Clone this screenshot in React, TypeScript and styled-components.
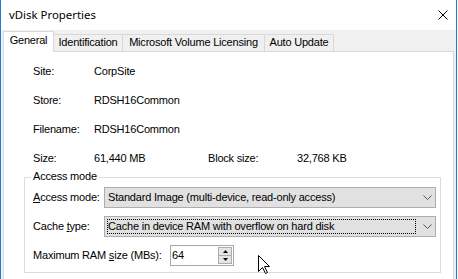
import React from 'react';
import styled, { createGlobalStyle } from 'styled-components';

const Global = createGlobalStyle`
  html, body { margin: 0; padding: 0; background: #ffffff; }
  body { width: 458px; height: 279px; overflow: hidden; }
`;

const Screen = styled.div`
  width: 458px;
  height: 279px;
  overflow: hidden;
  background: #ffffff;
`;

const Window = styled.div`
  position: relative;
  width: 457px;
  height: 292px;
  box-sizing: border-box;
  border-left: 1px solid #1a7fd6;
  border-right: 1px solid #1a7fd6;
  display: flex;
  flex-direction: column;
  font-family: "Liberation Sans", Arial, sans-serif;
  font-size: 11px;
  letter-spacing: -0.2px;
  color: #000000;
`;

const TitleBar = styled.div`
  height: 30px;
  flex: none;
  background: #ffffff;
  display: flex;
  align-items: center;
  justify-content: space-between;
  padding: 0 8px;
`;

const Title = styled.span`
  font-family: "Noto Sans", "Open Sans", sans-serif;
  font-size: 11.4px;
  letter-spacing: 0;
  line-height: 16px;
`;

const Body = styled.div`
  flex: 1;
  background: #f0f0f0;
  padding: 1px 2px 0;
  display: flex;
  flex-direction: column;
`;

const TabRow = styled.div`
  display: flex;
  align-items: flex-end;
  height: 20px;
  flex: none;
`;

const Tab = styled.div<{ $w: number; $active?: boolean }>`
  box-sizing: border-box;
  width: ${p => p.$w}px;
  height: ${p => (p.$active ? 21 : 17)}px;
  margin-bottom: ${p => (p.$active ? -1 : 0)}px;
  position: relative;
  z-index: ${p => (p.$active ? 1 : 0)};
  background: ${p => (p.$active ? '#ffffff' : '#f0f0f0')};
  border-top: 1px solid #d9d9d9;
  border-right: 1px solid #d9d9d9;
  border-left: ${p => (p.$active ? '1px solid #d9d9d9' : 'none')};
  padding-top: ${p => (p.$active ? 2 : 1)}px;
  text-align: center;
  line-height: 13px;
  white-space: nowrap;
`;

const Panel = styled.div`
  flex: 1;
  background: #ffffff;
  border: 1px solid #d9d9d9;
  padding: 13px 12px 0 20px;
`;

const InfoList = styled.div`
  display: flex;
  flex-direction: column;
  gap: 16px;
  margin-left: 9px;
`;

const InfoRow = styled.div`
  display: grid;
  grid-template-columns: 61px 114px 89px auto;
  line-height: 13px;
  white-space: nowrap;
`;

const GroupBox = styled.div`
  margin-top: 12px;
  border: 1px solid #dcdcdc;
  padding: 0 4px 6px 8px;
`;

const Legend = styled.div`
  width: fit-content;
  margin: -8px 0 0 -2px;
  padding: 0 2px;
  background: #ffffff;
  line-height: 13px;
`;

const Rows = styled.div`
  margin-top: 4px;
  display: flex;
  flex-direction: column;
  gap: 8px;
`;

const Row = styled.div`
  display: flex;
  align-items: center;
  height: 21px;
`;

const Label = styled.div<{ $w: number }>`
  width: ${p => p.$w}px;
  flex: none;
  line-height: 13px;
  white-space: nowrap;
`;

const Key = styled.span`
  text-decoration: underline;
  text-underline-offset: 1px;
`;

const Combo = styled.div`
  flex: 1;
  height: 21px;
  box-sizing: border-box;
  border: 1px solid #adadad;
  background: #e1e1e1;
  display: flex;
  align-items: stretch;
`;

const ComboValue = styled.div<{ $focused?: boolean }>`
  flex: 1;
  margin: 2px 0 2px 2px;
  border: 1px ${p => (p.$focused ? 'dotted #000000' : 'solid transparent')};
  display: flex;
  align-items: center;
  line-height: 13px;
  white-space: nowrap;
  overflow: hidden;
`;

const ComboArrow = styled.div`
  width: 19px;
  flex: none;
  display: flex;
  align-items: center;
  padding-left: 7px;
  box-sizing: border-box;
`;

const SpinBox = styled.div`
  width: 64px;
  height: 21px;
  box-sizing: border-box;
  border: 1px solid #a9a9a9;
  background: #ffffff;
  display: flex;
`;

const SpinText = styled.div`
  flex: 1;
  padding-left: 1px;
  display: flex;
  align-items: center;
  line-height: 13px;
`;

const SpinButtons = styled.div`
  width: 15px;
  box-sizing: border-box;
  padding: 1px 1px 1px 0;
  display: flex;
  flex-direction: column;
`;

const SpinButton = styled.div`
  flex: 1;
  box-sizing: border-box;
  border: 1px solid #adadad;
  background: #e5e5e5;
  display: flex;
  align-items: center;
  justify-content: center;
  & + & { margin-top: -1px; }
`;

const Cursor = styled.svg`
  position: absolute;
  left: 257px;
  top: 255px;
`;

const Chevron = () => (
  <svg width="9" height="5" viewBox="0 0 9 5">
    <polyline points="0.5,0.5 4.5,4.5 8.5,0.5" fill="none" stroke="#555555" strokeWidth="1" />
  </svg>
);

export default function App() {
  return (
    <Screen>
      <Global />
      <Window>
        <TitleBar>
          <Title>vDisk Properties</Title>
          <svg width="10" height="10" viewBox="0 0 10 10">
            <path d="M0.5 0.5 L9.5 9.5 M9.5 0.5 L0.5 9.5" stroke="#000000" strokeWidth="1" />
          </svg>
        </TitleBar>
        <Body>
          <TabRow>
            <Tab $w={51} $active>General</Tab>
            <Tab $w={69}>Identification</Tab>
            <Tab $w={142}>Microsoft Volume Licensing</Tab>
            <Tab $w={69}>Auto Update</Tab>
          </TabRow>
          <Panel>
            <InfoList>
              <InfoRow><span>Site:</span><span>CorpSite</span></InfoRow>
              <InfoRow><span>Store:</span><span>RDSH16Common</span></InfoRow>
              <InfoRow><span>Filename:</span><span>RDSH16Common</span></InfoRow>
              <InfoRow>
                <span>Size:</span><span>61,440 MB</span>
                <span>Block size:</span><span>32,768 KB</span>
              </InfoRow>
            </InfoList>
            <GroupBox>
              <Legend>Access mode</Legend>
              <Rows>
                <Row>
                  <Label $w={71}><Key>A</Key>ccess mode:</Label>
                  <Combo>
                    <ComboValue>Standard Image (multi-device, read-only access)</ComboValue>
                    <ComboArrow><Chevron /></ComboArrow>
                  </Combo>
                </Row>
                <Row>
                  <Label $w={71}>Cache <Key>t</Key>ype:</Label>
                  <Combo>
                    <ComboValue $focused>Cache in device RAM with overflow on hard disk</ComboValue>
                    <ComboArrow><Chevron /></ComboArrow>
                  </Combo>
                </Row>
                <Row>
                  <Label $w={137}>Maximum RAM <Key>s</Key>ize (MBs):</Label>
                  <SpinBox>
                    <SpinText>64</SpinText>
                    <SpinButtons>
                      <SpinButton>
                        <svg width="5" height="3" viewBox="0 0 5 3"><polygon points="2.5,0 5,3 0,3" fill="#000" /></svg>
                      </SpinButton>
                      <SpinButton>
                        <svg width="5" height="3" viewBox="0 0 5 3"><polygon points="0,0 5,0 2.5,3" fill="#000" /></svg>
                      </SpinButton>
                    </SpinButtons>
                  </SpinBox>
                </Row>
              </Rows>
            </GroupBox>
          </Panel>
        </Body>
        <Cursor width="13" height="20" viewBox="0 0 13 20">
          <polygon
            points="0.5,0.5 0.5,16.5 4.5,12.5 7.5,18.5 9.5,17.5 6.5,11.5 11.5,11.5"
            fill="#ffffff"
            stroke="#000000"
            strokeWidth="1"
            strokeLinejoin="miter"
          />
        </Cursor>
      </Window>
    </Screen>
  );
}
